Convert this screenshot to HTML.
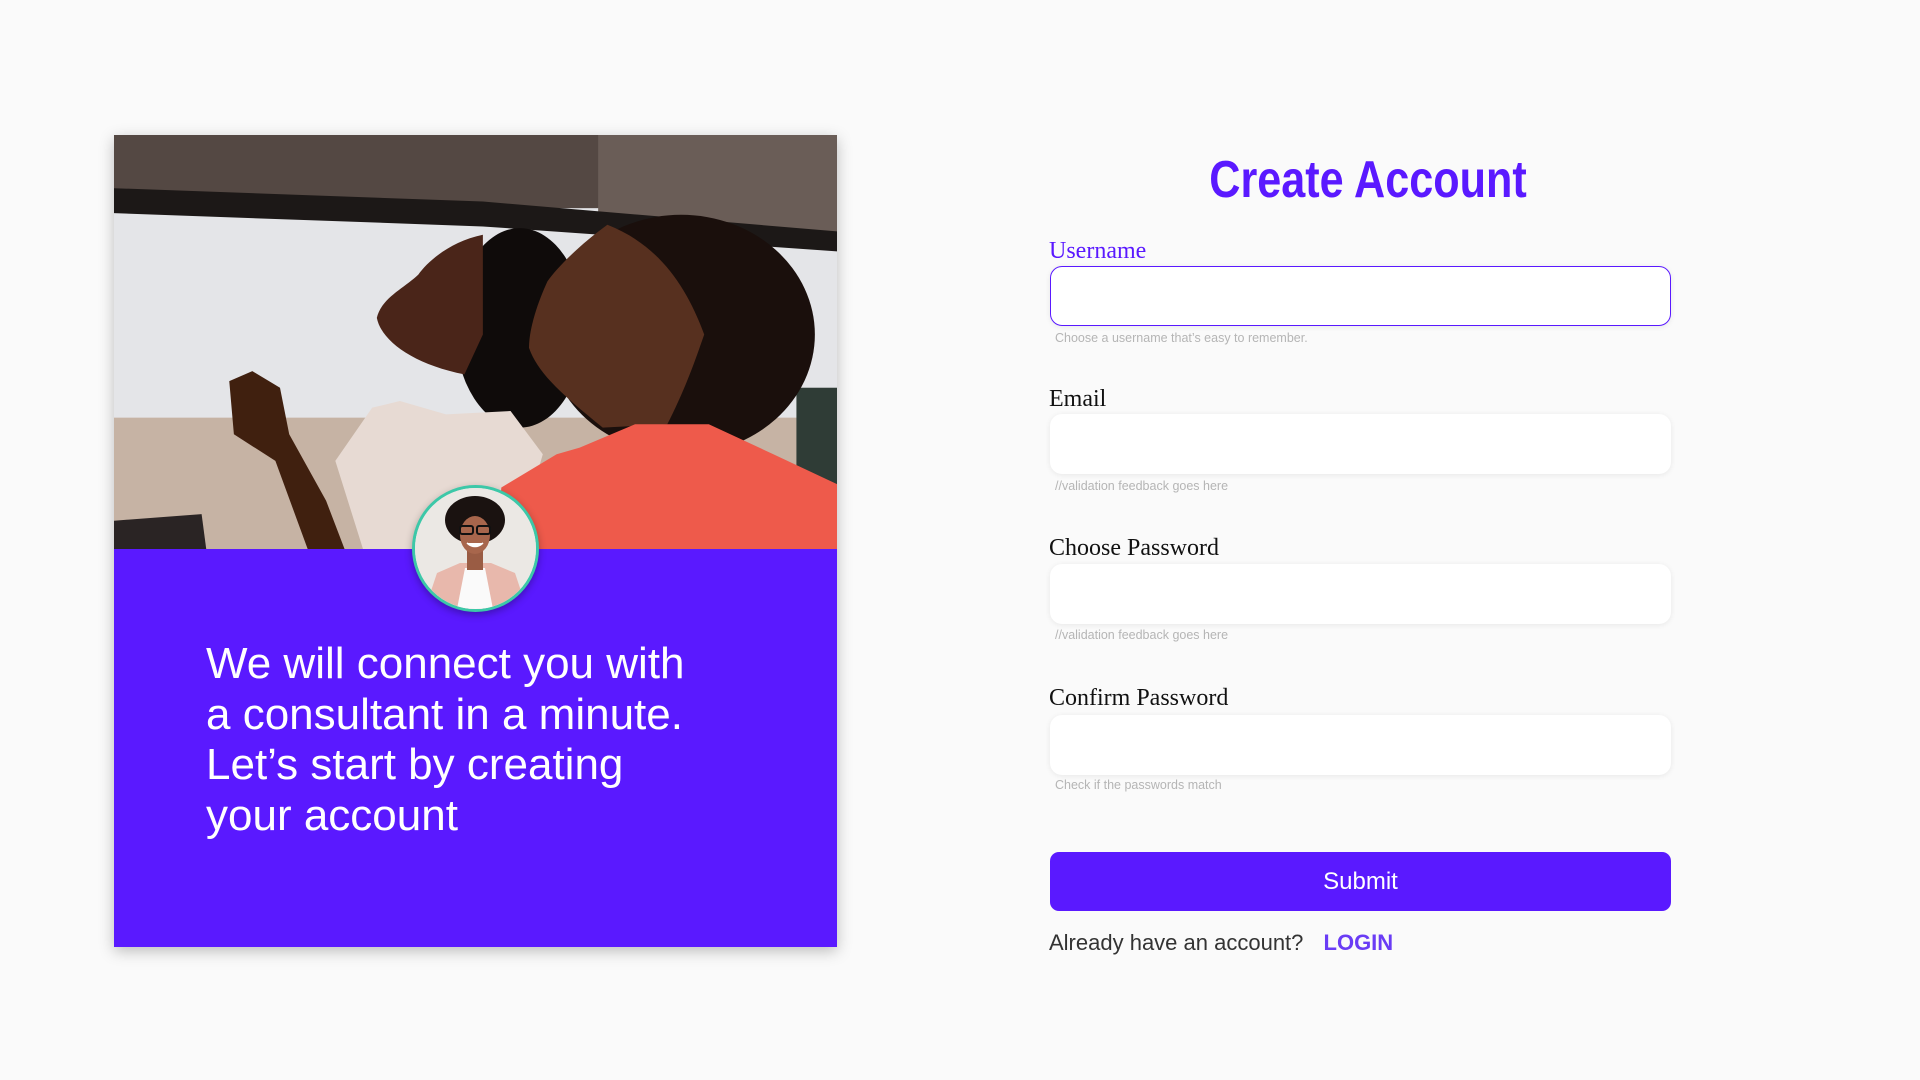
<!DOCTYPE html>
<html><head><meta charset="utf-8"><style>
*{margin:0;padding:0;box-sizing:border-box}
body{width:1920px;height:1080px;background:#fafafa;position:relative;overflow:hidden;font-family:"Liberation Sans",sans-serif}
.card{position:absolute;left:114px;top:135px;width:723px;height:812px;background:#5a19ff;box-shadow:0 4px 14px rgba(0,0,0,.25)}
.photo{position:absolute;left:0;top:0;width:723px;height:414px;overflow:hidden}
.avatar{position:absolute;left:412px;top:485px;width:127px;height:127px;border-radius:50%;border:3px solid #3cc8a8;overflow:hidden;background:#e9e6e3;box-shadow:0 3px 8px rgba(0,0,0,.3)}
.msg{position:absolute;left:92px;top:504px;color:#fff;font-size:44px;line-height:50.5px;white-space:nowrap}
h1{position:absolute;left:1368px;top:150px;transform:translateX(-50%) scaleX(.83);font-size:52px;font-weight:bold;color:#5a19ff;white-space:nowrap;line-height:60px}
.lab{position:absolute;left:1049px;font-family:"Liberation Serif",serif;font-size:24px;color:#111;line-height:28px}
.inp{position:absolute;left:1050px;width:621px;height:60px;background:#fff;border-radius:12px;box-shadow:0 1px 6px rgba(0,0,0,.08)}
.help{position:absolute;left:1055px;font-size:12.5px;color:#b5b5b5;line-height:16px}
.btn{position:absolute;left:1050px;top:852px;width:621px;height:59px;background:#5a19ff;border-radius:9px;color:#fff;font-size:24px;text-align:center;line-height:59px}
.al{position:absolute;left:1049px;top:928px;font-size:22px;color:#333;line-height:30px;white-space:nowrap}
.al b{color:#6a3cf5;margin-left:14px}
</style></head><body>
<div class="card">
<div class="photo">
<svg width="723" height="414" viewBox="0 0 1568 1245" preserveAspectRatio="none">
<rect width="1568" height="1245" fill="#e4e5e8"/>
<rect width="1568" height="220" fill="#544843"/>
<polygon points="1050,0 1568,0 1568,300 1050,240" fill="#6a5d57"/>
<polygon points="0,160 800,200 1568,290 1568,350 800,275 0,235" fill="#1c1817"/>
<rect y="850" width="1568" height="400" fill="#c6b3a4"/>
<rect x="1480" y="760" width="90" height="380" fill="#2f3c36"/>
<polygon points="0,1160 190,1140 200,1245 0,1245" fill="#2a2424"/>
<ellipse cx="880" cy="580" rx="140" ry="300" fill="#0f0b0a"/>
<path d="M800,300 C730,320 680,380 660,420 C630,460 580,490 570,550 C580,620 650,690 760,720 L800,600 Z" fill="#4a2519"/>
<polygon points="560,820 620,800 720,840 860,830 930,960 870,1245 540,1245 480,980" fill="#e7dad3"/>
<polygon points="250,740 300,710 360,760 380,900 460,1100 500,1245 420,1245 350,980 260,900" fill="#40200f"/>
<ellipse cx="1230" cy="600" rx="290" ry="360" fill="#1a0f0c"/>
<path d="M1070,270 C1010,330 960,400 940,440 C920,500 900,580 900,640 C920,720 980,790 1060,880 L1200,870 C1240,760 1260,680 1280,600 C1240,450 1180,330 1070,270 Z" fill="#57301f"/>
<polygon points="840,1060 960,960 1010,940 1130,870 1290,870 1430,960 1568,1050 1568,1245 830,1245" fill="#ee5a4b"/>
</svg>
</div>
<div class="msg">We will connect you with<br>a consultant in a minute.<br>Let’s start by creating<br>your account</div>
</div>
<div class="avatar">
<svg width="121" height="121" viewBox="0 0 121 121">
<rect width="121" height="121" fill="#ebe8e4"/>
<polygon points="10,121 22,85 45,75 76,75 100,85 112,121" fill="#e8b8ac"/>
<polygon points="42,121 50,80 70,80 78,121" fill="#fafafa"/>
<rect x="52" y="60" width="16" height="22" fill="#9a5c44"/>
<ellipse cx="60" cy="32" rx="30" ry="24" fill="#1a1210"/>
<ellipse cx="60" cy="47" rx="15" ry="19" fill="#a8664c"/>
<rect x="45" y="38" width="13" height="8" rx="2" fill="none" stroke="#111" stroke-width="2"/>
<rect x="62" y="38" width="13" height="8" rx="2" fill="none" stroke="#111" stroke-width="2"/>
<path d="M52 55 Q60 62 68 55" fill="#fff" stroke="#fff" stroke-width="1.5"/>
</svg>
</div>
<h1>Create Account</h1>
<div class="lab" style="top:237px;color:#5a19ff">Username</div>
<div class="inp" style="top:266px;border:1.5px solid #5a19ff"></div>
<div class="help" style="top:330px">Choose a username that’s easy to remember.</div>
<div class="lab" style="top:385px">Email</div>
<div class="inp" style="top:414px"></div>
<div class="help" style="top:478px">//validation feedback goes here</div>
<div class="lab" style="top:534px">Choose Password</div>
<div class="inp" style="top:564px"></div>
<div class="help" style="top:627px">//validation feedback goes here</div>
<div class="lab" style="top:684px">Confirm Password</div>
<div class="inp" style="top:715px"></div>
<div class="help" style="top:777px">Check if the passwords match</div>
<div class="btn">Submit</div>
<div class="al">Already have an account? <b>LOGIN</b></div>
</body></html>
